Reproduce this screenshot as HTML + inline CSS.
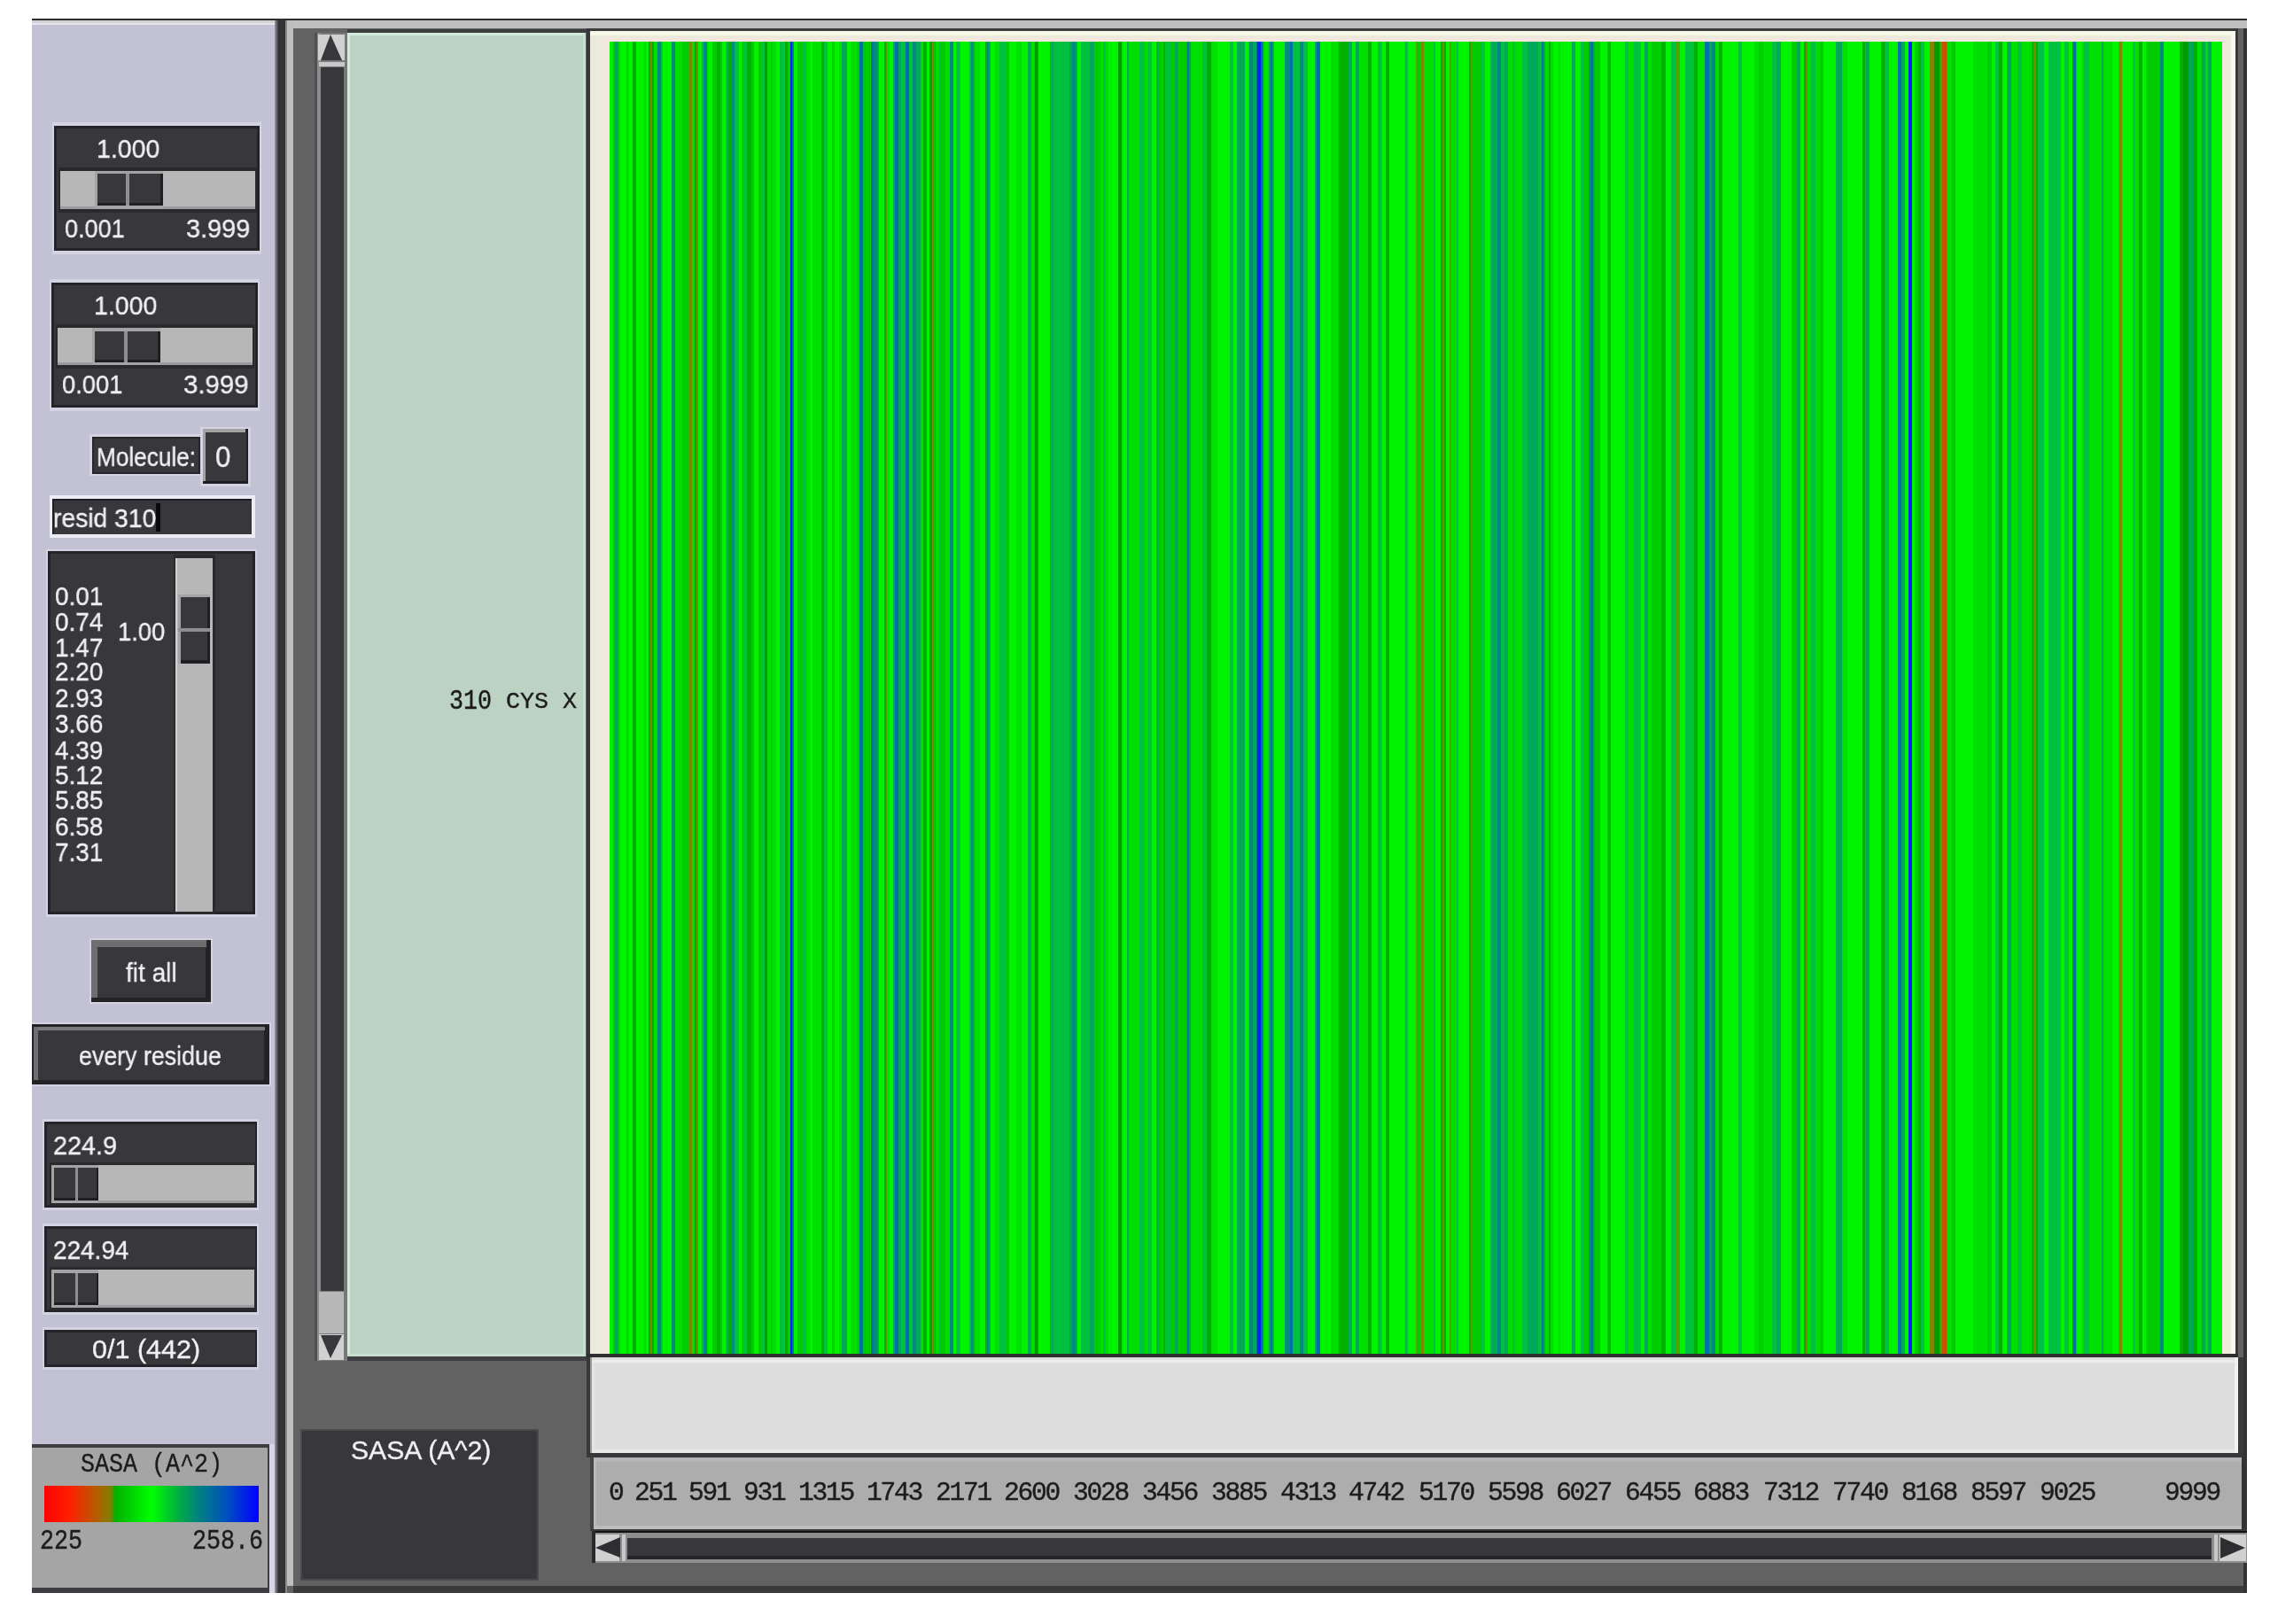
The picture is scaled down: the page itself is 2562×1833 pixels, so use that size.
<!DOCTYPE html>
<html><head><meta charset="utf-8">
<style>
html,body{margin:0;padding:0;}
body{width:2562px;height:1833px;background:#fff;position:relative;overflow:hidden;font-family:"Liberation Sans",sans-serif;}
.a{position:absolute;}
.dk{background:#38373c;}
.w{position:absolute;color:#f0f0f0;-webkit-text-stroke:0.35px #f0f0f0;font-family:"Liberation Sans",sans-serif;white-space:pre;line-height:1;transform-origin:0 0;will-change:transform;}
.m{position:absolute;color:#1c1c1c;font-family:"Liberation Mono",monospace;font-weight:normal;-webkit-text-stroke:0.35px #1c1c1c;white-space:pre;line-height:1;transform-origin:0 0;will-change:transform;}
#wrap{position:absolute;left:0;top:0;width:2562px;height:1833px;}
</style></head><body><div id="wrap">
<!-- top black line -->
<div class="a" style="left:36px;top:21px;width:2500px;height:2px;background:#2e2e30"></div>
<!-- left panel -->
<div class="a" style="left:36px;top:23px;width:275px;height:1775px;background:#c3c2d4"></div>
<div class="a" style="left:36px;top:23px;width:275px;height:3px;background:#d2d2d6"></div>
<div class="a" style="left:36px;top:26px;width:275px;height:2px;background:#e6e6ee"></div>
<div class="a" style="left:310px;top:23px;width:4px;height:1775px;background:linear-gradient(90deg,#9c9cac,#3a3a3e)"></div>
<!-- separator -->
<div class="a" style="left:314px;top:23px;width:8px;height:1775px;background:#333335"></div>
<!-- right region -->
<div class="a" style="left:322px;top:23px;width:2214px;height:1775px;background:#626262"></div>
<div class="a" style="left:322px;top:23px;width:2214px;height:9px;background:#c0c0c0"></div>
<div class="a" style="left:322px;top:23px;width:2px;height:1775px;background:#8a8a8a"></div>
<div class="a" style="left:324px;top:23px;width:7px;height:1767px;background:#bebebe"></div>
<div class="a" style="left:331px;top:1790px;width:2205px;height:8px;background:#3a3a3a"></div>
<div class="a" style="left:2532px;top:32px;width:4px;height:1766px;background:#333335"></div>

<!-- vertical scrollbar -->
<div class="a" style="left:355px;top:37px;width:37px;height:1499px;background:#787878"></div>
<div class="a" style="left:355px;top:37px;width:3px;height:1499px;background:#505052"></div>
<div class="a" style="left:358px;top:37px;width:4px;height:1499px;background:#8c8c8c"></div>
<div class="a" style="left:359px;top:39px;width:30px;height:29px;background:#d0d0d0"></div>
<svg class="a" style="left:359px;top:39px" width="30" height="29"><polygon points="14,0 3,29 27,29" fill="#38373c"/></svg>
<div class="a" style="left:360px;top:70px;width:29px;height:5px;background:#c8c8c8"></div>
<div class="a dk" style="left:362px;top:76px;width:26px;height:1381px"></div>
<div class="a" style="left:360px;top:1458px;width:28px;height:47px;background:#b8b8b8"></div>
<div class="a" style="left:360px;top:1506px;width:28px;height:29px;background:#d0d0d0"></div>
<svg class="a" style="left:360px;top:1506px" width="28" height="29"><polygon points="2,1 26,1 13,27" fill="#38373c"/></svg>

<!-- label column -->
<div class="a" style="left:392px;top:33px;width:270px;height:4px;background:#3c3f3e"></div>
<div class="a" style="left:392px;top:37px;width:269px;height:1494px;background:#bcd2c3"></div>
<div class="a" style="left:392px;top:37px;width:269px;height:3px;background:#d2ead9"></div>
<div class="a" style="left:392px;top:37px;width:3px;height:1494px;background:#d2ead9"></div>
<div class="a" style="left:658px;top:37px;width:3px;height:1494px;background:#c8e0d0"></div>
<div class="a" style="left:392px;top:1528px;width:269px;height:3px;background:#c8e0d0"></div>
<div class="a" style="left:392px;top:1531px;width:270px;height:5px;background:#404044"></div>
<div class="a" style="left:662px;top:32px;width:4px;height:1612px;background:#38383a"></div>

<!-- canvas -->
<div class="a" style="left:666px;top:32px;width:1860px;height:3px;background:#3c3c3c"></div>
<div class="a" style="left:666px;top:35px;width:1857px;height:1493px;background:#eceada"></div>
<div class="a" style="left:666px;top:35px;width:1857px;height:5px;background:#f8f8ea"></div>
<div class="a" style="left:682px;top:43px;width:1829px;height:4px;background:#f6e6e0"></div>
<div class="a" style="left:682px;top:43px;width:5px;height:1485px;background:#f6e6e0"></div>
<div class="a" style="left:2508px;top:43px;width:4px;height:1485px;background:#f6e6e0"></div>
<div class="a" style="left:2518px;top:35px;width:5px;height:1493px;background:#f8f8ec"></div>
<div class="a" style="left:2523px;top:32px;width:3px;height:1500px;background:#38383a"></div>
<div class="a" style="left:662px;top:1528px;width:1864px;height:4px;background:#2e2e30"></div>
<div id="stripes" class="a" style="left:688px;top:47px;width:1820px;height:1481px;background:#00d800"></div>

<!-- light panel -->
<div class="a" style="left:666px;top:1532px;width:1860px;height:108px;background:#dddddd"></div>
<div class="a" style="left:666px;top:1535px;width:1860px;height:3px;background:#ececec"></div>
<div class="a" style="left:666px;top:1532px;width:2px;height:108px;background:#9a9a9a"></div>
<div class="a" style="left:668px;top:1538px;width:3px;height:102px;background:#e6e6e6"></div>
<div class="a" style="left:2522px;top:1532px;width:4px;height:108px;background:#f2f2f2"></div>
<div class="a" style="left:2526px;top:1532px;width:6px;height:113px;background:#3a3a3a"></div>
<div class="a" style="left:668px;top:1636px;width:1854px;height:4px;background:#e8e8e8"></div>
<div class="a" style="left:662px;top:1640px;width:1870px;height:5px;background:#38383c"></div>

<!-- axis panel -->
<div class="a" style="left:666px;top:1645px;width:1869px;height:81px;background:#adadad"></div>
<div class="a" style="left:666px;top:1645px;width:4px;height:81px;background:#444"></div>
<div class="a" style="left:670px;top:1646px;width:1860px;height:4px;background:#b6b6b6"></div>
<div class="a" style="left:670px;top:1646px;width:3px;height:76px;background:#bababa"></div>
<div class="a" style="left:670px;top:1722px;width:1860px;height:4px;background:#bdbdbd"></div>
<div class="a" style="left:2530px;top:1645px;width:6px;height:83px;background:#333335"></div>
<div class="a" style="left:666px;top:1726px;width:1870px;height:2px;background:#3a3a3a"></div>

<!-- horizontal scrollbar -->
<div class="a" style="left:668px;top:1728px;width:1868px;height:2px;background:#111"></div>
<div class="a" style="left:668px;top:1730px;width:1868px;height:34px;background:#8e8e8e"></div>
<div class="a" style="left:668px;top:1728px;width:4px;height:36px;background:#2a2a2a"></div>
<div class="a" style="left:672px;top:1732px;width:27px;height:30px;background:#d0d0d0"></div>
<svg class="a" style="left:672px;top:1732px" width="28" height="30"><polygon points="0,15 28,3 28,26" fill="#2e2e32"/></svg>
<div class="a" style="left:702px;top:1732px;width:4px;height:30px;background:#c8c8c8"></div>
<div class="a dk" style="left:708px;top:1736px;width:1788px;height:24px"></div>
<div class="a" style="left:708px;top:1756px;width:1788px;height:4px;background:#242428"></div>
<div class="a" style="left:2499px;top:1732px;width:4px;height:30px;background:#c8c8c8"></div>
<div class="a" style="left:2505px;top:1732px;width:30px;height:30px;background:#d0d0d0"></div>
<svg class="a" style="left:2505px;top:1732px" width="30" height="30"><polygon points="1,3 29,15 1,27" fill="#2e2e32"/></svg>

<!-- SASA label box -->
<div class="a" style="left:339px;top:1613px;width:269px;height:171px;background:#4a4a4c"></div>
<div class="a dk" style="left:341px;top:1615px;width:265px;height:167px"></div>

<!-- color scale box -->
<div class="a" style="left:36px;top:1630px;width:268px;height:168px;background:#3e3e42"></div>
<div class="a" style="left:36px;top:1634px;width:266px;height:158px;background:#a5a5a5"></div>
<div class="a" style="left:304px;top:1630px;width:6px;height:168px;background:#d6d6e6"></div>
<div class="a" style="left:50px;top:1677px;width:242px;height:41px;background:linear-gradient(90deg,#ff0000 0%,#ff2000 12%,#b06000 25%,#808000 31%,#00b000 33%,#00ff00 50%,#00b040 62%,#008080 72%,#0050c0 85%,#0000ff 100%)"></div>


<div class="a" style="left:59px;top:138px;width:236px;height:149px;background:#d3d3e3;"></div>
<div class="a" style="left:61px;top:142px;width:232px;height:141px;background:#242428;"></div>
<div class="a" style="left:64px;top:145px;width:226px;height:135px;background:#38373c;"></div>
<div class="a" style="left:66px;top:189px;width:224px;height:50.5px;background:#2a2a2e;"></div>
<div class="a" style="left:68px;top:193px;width:220px;height:42.5px;background:#b7b7b7;"></div>
<div class="a" style="left:68px;top:232.5px;width:220px;height:3.0px;background:#9c9c9c;"></div>
<div class="a" style="left:106.6px;top:193px;width:77.1px;height:42.5px;background:#a4a4a4;"></div>
<div class="a" style="left:109.6px;top:196px;width:74.1px;height:36px;background:#1f1f23;"></div>
<div class="a" style="left:109.6px;top:196px;width:71.1px;height:33px;background:#38373c;"></div>
<div class="a" style="left:142.4px;top:196px;width:3.6px;height:36px;background:#8e8e8e;"></div>
<div class="w" style="left:108.8px;top:152.5px;font-size:30px;transform:scaleX(0.949)">1.000</div>
<div class="w" style="left:72.8px;top:242.6px;font-size:30px;transform:scaleX(0.901)">0.001</div>
<div class="w" style="left:209.6px;top:242.6px;font-size:30px;transform:scaleX(0.962)">3.999</div>
<div class="a" style="left:56px;top:314.5px;width:237px;height:149.2px;background:#d3d3e3;"></div>
<div class="a" style="left:58px;top:318.5px;width:233px;height:141.2px;background:#242428;"></div>
<div class="a" style="left:61px;top:321.5px;width:227px;height:135.2px;background:#38373c;"></div>
<div class="a" style="left:63.3px;top:366.3px;width:224.2px;height:49.9px;background:#2a2a2e;"></div>
<div class="a" style="left:65.3px;top:370.3px;width:220.2px;height:41.9px;background:#b7b7b7;"></div>
<div class="a" style="left:65.3px;top:409.2px;width:220.2px;height:3.0px;background:#9c9c9c;"></div>
<div class="a" style="left:104px;top:370.3px;width:76.6px;height:41.9px;background:#a4a4a4;"></div>
<div class="a" style="left:107px;top:373.5px;width:73.6px;height:35.0px;background:#1f1f23;"></div>
<div class="a" style="left:107px;top:373.5px;width:70.6px;height:32.0px;background:#38373c;"></div>
<div class="a" style="left:140px;top:373.5px;width:3.6px;height:35.0px;background:#8e8e8e;"></div>
<div class="w" style="left:106.3px;top:330.0px;font-size:30px;transform:scaleX(0.949)">1.000</div>
<div class="w" style="left:69.7px;top:418.7px;font-size:30px;transform:scaleX(0.910)">0.001</div>
<div class="w" style="left:206.5px;top:418.7px;font-size:30px;transform:scaleX(0.979)">3.999</div>
<div class="a" style="left:101px;top:490px;width:127px;height:47px;background:#d3d3e3;"></div>
<div class="a" style="left:103.5px;top:492.8px;width:122.8px;height:42.0px;background:#26262a;"></div>
<div class="a" style="left:105.5px;top:494.8px;width:118.8px;height:38.0px;background:#38373c;"></div>
<div class="w" style="left:109.0px;top:501.3px;font-size:30px;transform:scaleX(0.873)">Molecule:</div>
<div class="a" style="left:226px;top:482px;width:57px;height:67px;background:#d3d3e3;"></div>
<div class="a" style="left:228.7px;top:484.2px;width:51.8px;height:62.3px;background:#1e1e22;"></div>
<div class="a" style="left:228.7px;top:484.2px;width:48.8px;height:59.3px;background:#a2a2a2;"></div>
<div class="a" style="left:232px;top:488px;width:45.5px;height:55px;background:#38373c;"></div>
<div class="w" style="left:242.6px;top:498.5px;font-size:33px;transform:scaleX(0.95)">0</div>
<div class="a" style="left:56px;top:558.8px;width:232px;height:48.2px;background:#ececf4;"></div>
<div class="a" style="left:58.5px;top:563px;width:225.7px;height:40.2px;background:#1e1e22;"></div>
<div class="a" style="left:60.5px;top:565px;width:223.7px;height:38.2px;background:#38373c;"></div>
<div class="w" style="left:60.1px;top:570.4px;font-size:30px;transform:scaleX(0.942)">resid 310</div>
<div class="a" style="left:176px;top:568px;width:5px;height:31.5px;background:#0a0a0a;"></div>
<div class="a" style="left:51.5px;top:620px;width:238.5px;height:415px;background:#d3d3e3;"></div>
<div class="a" style="left:53.5px;top:622.2px;width:234.5px;height:410.2px;background:#242428;"></div>
<div class="a" style="left:56.5px;top:625.2px;width:228.5px;height:404.2px;background:#38373c;"></div>
<div class="a" style="left:195.5px;top:626px;width:47.5px;height:406px;background:#2a2a2e;"></div>
<div class="a" style="left:197.8px;top:629.6px;width:42.7px;height:399.4px;background:#b7b7b7;"></div>
<div class="a" style="left:197.8px;top:629.6px;width:2.2px;height:399.4px;background:#d0d0d0;"></div>
<div class="a" style="left:201px;top:671px;width:36px;height:78px;background:#a4a4a4;"></div>
<div class="a" style="left:204px;top:674px;width:33px;height:75px;background:#1f1f23;"></div>
<div class="a" style="left:204px;top:674px;width:30px;height:71px;background:#38373c;"></div>
<div class="a" style="left:201px;top:709px;width:36px;height:4px;background:#8e8e8e;"></div>
<div class="w" style="left:61.8px;top:657.5px;font-size:30px;transform:scaleX(0.930)">0.01</div>
<div class="w" style="left:61.8px;top:686.6px;font-size:30px;transform:scaleX(0.930)">0.74</div>
<div class="w" style="left:61.8px;top:716.4px;font-size:30px;transform:scaleX(0.930)">1.47</div>
<div class="w" style="left:61.8px;top:742.8px;font-size:30px;transform:scaleX(0.930)">2.20</div>
<div class="w" style="left:61.8px;top:772.6px;font-size:30px;transform:scaleX(0.930)">2.93</div>
<div class="w" style="left:61.8px;top:802.4px;font-size:30px;transform:scaleX(0.930)">3.66</div>
<div class="w" style="left:61.8px;top:832.3px;font-size:30px;transform:scaleX(0.930)">4.39</div>
<div class="w" style="left:61.8px;top:860.0px;font-size:30px;transform:scaleX(0.930)">5.12</div>
<div class="w" style="left:61.8px;top:888.2px;font-size:30px;transform:scaleX(0.930)">5.85</div>
<div class="w" style="left:61.8px;top:918.0px;font-size:30px;transform:scaleX(0.930)">6.58</div>
<div class="w" style="left:61.8px;top:947.0px;font-size:30px;transform:scaleX(0.930)">7.31</div>
<div class="w" style="left:133.2px;top:698.0px;font-size:30px;transform:scaleX(0.911)">1.00</div>
<div class="a" style="left:100.8px;top:1059px;width:138.8px;height:73.7px;background:#d3d3e3;"></div>
<div class="a" style="left:102.8px;top:1061px;width:134.8px;height:69.7px;background:#232326;"></div>
<div class="a" style="left:102.8px;top:1061px;width:130.2px;height:7.7px;background:#6e6e70;"></div>
<div class="a" style="left:102.8px;top:1061px;width:7.2px;height:65px;background:#6e6e70;"></div>
<div class="a" style="left:110px;top:1068.7px;width:122px;height:57.3px;background:#38373c;"></div>
<div class="w" style="left:141.5px;top:1083.4px;font-size:30px;transform:scaleX(0.935)">fit all</div>
<div class="a" style="left:36px;top:1153.6px;width:270px;height:72.4px;background:#d3d3e3;"></div>
<div class="a" style="left:36.4px;top:1155.6px;width:267.6px;height:68.4px;background:#232326;"></div>
<div class="a" style="left:38px;top:1159px;width:261px;height:3.6px;background:#7a7a7c;"></div>
<div class="a" style="left:38px;top:1159px;width:4.8px;height:60px;background:#6e6e70;"></div>
<div class="a" style="left:42.8px;top:1162.6px;width:255.2px;height:56.4px;background:#38373c;"></div>
<div class="w" style="left:88.9px;top:1177.0px;font-size:30px;transform:scaleX(0.893)">every residue</div>
<div class="a" style="left:48.3px;top:1262.7px;width:244.1px;height:103.0px;background:#d3d3e3;"></div>
<div class="a" style="left:50.3px;top:1265.7px;width:240.1px;height:97.0px;background:#242428;"></div>
<div class="a" style="left:53px;top:1268.7px;width:234.5px;height:91.0px;background:#38373c;"></div>
<div class="a" style="left:55.7px;top:1311.6px;width:233.0px;height:49.4px;background:#2a2a2e;"></div>
<div class="a" style="left:57.7px;top:1314.6px;width:229.0px;height:43.4px;background:#b7b7b7;"></div>
<div class="a" style="left:57.7px;top:1355px;width:229.0px;height:3px;background:#9c9c9c;"></div>
<div class="a" style="left:57.7px;top:1314.6px;width:53.6px;height:43.4px;background:#a4a4a4;"></div>
<div class="a" style="left:61px;top:1318.3px;width:50.3px;height:37.0px;background:#1f1f23;"></div>
<div class="a" style="left:61px;top:1318.3px;width:47.5px;height:34.0px;background:#38373c;"></div>
<div class="a" style="left:84.5px;top:1318.3px;width:3.7px;height:37.0px;background:#8e8e8e;"></div>
<div class="w" style="left:59.6px;top:1278.3px;font-size:30px;transform:scaleX(0.959)">224.9</div>
<div class="a" style="left:48.3px;top:1381px;width:244.1px;height:103px;background:#d3d3e3;"></div>
<div class="a" style="left:50.3px;top:1384px;width:240.1px;height:97px;background:#242428;"></div>
<div class="a" style="left:53px;top:1387px;width:234.5px;height:91px;background:#38373c;"></div>
<div class="a" style="left:55.7px;top:1430px;width:233.0px;height:49.3px;background:#2a2a2e;"></div>
<div class="a" style="left:57.7px;top:1433px;width:229.0px;height:43.3px;background:#b7b7b7;"></div>
<div class="a" style="left:57.7px;top:1473.3px;width:229.0px;height:3.0px;background:#9c9c9c;"></div>
<div class="a" style="left:57.7px;top:1433px;width:53.6px;height:43.3px;background:#a4a4a4;"></div>
<div class="a" style="left:61px;top:1436.6px;width:50.3px;height:36.9px;background:#1f1f23;"></div>
<div class="a" style="left:61px;top:1436.6px;width:47.5px;height:33.9px;background:#38373c;"></div>
<div class="a" style="left:84.5px;top:1436.6px;width:3.7px;height:36.9px;background:#8e8e8e;"></div>
<div class="w" style="left:59.7px;top:1395.6px;font-size:30px;transform:scaleX(0.931)">224.94</div>
<div class="a" style="left:48.3px;top:1498.2px;width:244.1px;height:47.6px;background:#d3d3e3;"></div>
<div class="a" style="left:50.3px;top:1501.2px;width:240.1px;height:41.6px;background:#242428;"></div>
<div class="a" style="left:53px;top:1503.5px;width:234.5px;height:36.8px;background:#38373c;"></div>
<div class="w" style="left:103.9px;top:1508.4px;font-size:30px;transform:scaleX(1.017)">0/1 (442)</div>
<div class="w" style="left:395.8px;top:1621.8px;font-size:30px;transform:scaleX(1.005)">SASA (A^2)</div>
<div class="m" style="left:90.6px;top:1638.8px;font-size:26.7px;letter-spacing:0.0px;transform:scale(1.0,1.08);">SASA (A^2)</div>
<div class="m" style="left:44.8px;top:1725.0px;font-size:26.7px;letter-spacing:0.0px;transform:scale(1.0,1.15);">225</div>
<div class="m" style="left:216.6px;top:1725.0px;font-size:26.7px;letter-spacing:0.0px;transform:scale(1.0,1.15);">258.6</div>
<div class="m" style="left:507.0px;top:776.5px;font-size:26.7px;letter-spacing:0.0px;transform:scale(1.0,1.15);">310</div>
<div class="m" style="left:571.0px;top:779.1px;font-size:26.7px;letter-spacing:0.0px;transform:scale(1.0,1.0);">CYS</div>
<div class="m" style="left:635.0px;top:779.1px;font-size:26.7px;letter-spacing:0.0px;transform:scale(1.0,1.0);">X</div>
<div class="m" style="left:686.6px;top:1672.0px;font-size:25.9px;letter-spacing:-1.95px;transform:scale(1.143,1.12);">0</div>
<div class="m" style="left:716.2px;top:1672.0px;font-size:25.9px;letter-spacing:-1.95px;transform:scale(1.143,1.12);">251</div>
<div class="m" style="left:776.8px;top:1672.0px;font-size:25.9px;letter-spacing:-1.95px;transform:scale(1.143,1.12);">591</div>
<div class="m" style="left:838.8px;top:1672.0px;font-size:25.9px;letter-spacing:-1.95px;transform:scale(1.143,1.12);">931</div>
<div class="m" style="left:900.8px;top:1672.0px;font-size:25.9px;letter-spacing:-1.95px;transform:scale(1.143,1.12);">1315</div>
<div class="m" style="left:978.4px;top:1672.0px;font-size:25.9px;letter-spacing:-1.95px;transform:scale(1.143,1.12);">1743</div>
<div class="m" style="left:1055.8px;top:1672.0px;font-size:25.9px;letter-spacing:-1.95px;transform:scale(1.143,1.12);">2171</div>
<div class="m" style="left:1133.4px;top:1672.0px;font-size:25.9px;letter-spacing:-1.95px;transform:scale(1.143,1.12);">2600</div>
<div class="m" style="left:1210.8px;top:1672.0px;font-size:25.9px;letter-spacing:-1.95px;transform:scale(1.143,1.12);">3028</div>
<div class="m" style="left:1289.4px;top:1672.0px;font-size:25.9px;letter-spacing:-1.95px;transform:scale(1.143,1.12);">3456</div>
<div class="m" style="left:1366.8px;top:1672.0px;font-size:25.9px;letter-spacing:-1.95px;transform:scale(1.143,1.12);">3885</div>
<div class="m" style="left:1444.5px;top:1672.0px;font-size:25.9px;letter-spacing:-1.95px;transform:scale(1.143,1.12);">4313</div>
<div class="m" style="left:1521.8px;top:1672.0px;font-size:25.9px;letter-spacing:-1.95px;transform:scale(1.143,1.12);">4742</div>
<div class="m" style="left:1600.8px;top:1672.0px;font-size:25.9px;letter-spacing:-1.95px;transform:scale(1.143,1.12);">5170</div>
<div class="m" style="left:1678.5px;top:1672.0px;font-size:25.9px;letter-spacing:-1.95px;transform:scale(1.143,1.12);">5598</div>
<div class="m" style="left:1755.8px;top:1672.0px;font-size:25.9px;letter-spacing:-1.95px;transform:scale(1.143,1.12);">6027</div>
<div class="m" style="left:1833.5px;top:1672.0px;font-size:25.9px;letter-spacing:-1.95px;transform:scale(1.143,1.12);">6455</div>
<div class="m" style="left:1911.3px;top:1672.0px;font-size:25.9px;letter-spacing:-1.95px;transform:scale(1.143,1.12);">6883</div>
<div class="m" style="left:1989.5px;top:1672.0px;font-size:25.9px;letter-spacing:-1.95px;transform:scale(1.143,1.12);">7312</div>
<div class="m" style="left:2067.6px;top:1672.0px;font-size:25.9px;letter-spacing:-1.95px;transform:scale(1.143,1.12);">7740</div>
<div class="m" style="left:2145.8px;top:1672.0px;font-size:25.9px;letter-spacing:-1.95px;transform:scale(1.143,1.12);">8168</div>
<div class="m" style="left:2223.8px;top:1672.0px;font-size:25.9px;letter-spacing:-1.95px;transform:scale(1.143,1.12);">8597</div>
<div class="m" style="left:2301.8px;top:1672.0px;font-size:25.9px;letter-spacing:-1.95px;transform:scale(1.143,1.12);">9025</div>
<div class="m" style="left:2443.2px;top:1672.0px;font-size:25.9px;letter-spacing:-1.95px;transform:scale(1.143,1.12);">9999</div>
<div class="a" style="left:688.0px;top:47px;width:3.9px;height:1481px;background:#00f400"></div>
<div class="a" style="left:691.9px;top:47px;width:2.0px;height:1481px;background:#00cc00"></div>
<div class="a" style="left:694.0px;top:47px;width:3.7px;height:1481px;background:#00a858"></div>
<div class="a" style="left:697.6px;top:47px;width:2.0px;height:1481px;background:#00e000"></div>
<div class="a" style="left:699.7px;top:47px;width:7.3px;height:1481px;background:#00f400"></div>
<div class="a" style="left:707.0px;top:47px;width:3.3px;height:1481px;background:#00e000"></div>
<div class="a" style="left:710.3px;top:47px;width:4.1px;height:1481px;background:#00f400"></div>
<div class="a" style="left:714.3px;top:47px;width:3.3px;height:1481px;background:#00b000"></div>
<div class="a" style="left:717.6px;top:47px;width:8.1px;height:1481px;background:#00f400"></div>
<div class="a" style="left:725.7px;top:47px;width:3.7px;height:1481px;background:#00e000"></div>
<div class="a" style="left:729.4px;top:47px;width:2.9px;height:1481px;background:#00f400"></div>
<div class="a" style="left:732.3px;top:47px;width:1.6px;height:1481px;background:#00b000"></div>
<div class="a" style="left:733.9px;top:47px;width:2.0px;height:1481px;background:#7c8800"></div>
<div class="a" style="left:735.9px;top:47px;width:2.0px;height:1481px;background:#00b000"></div>
<div class="a" style="left:738.0px;top:47px;width:4.1px;height:1481px;background:#00e000"></div>
<div class="a" style="left:742.0px;top:47px;width:4.1px;height:1481px;background:#008a80"></div>
<div class="a" style="left:746.1px;top:47px;width:1.6px;height:1481px;background:#00c040"></div>
<div class="a" style="left:747.8px;top:47px;width:10.6px;height:1481px;background:#00f400"></div>
<div class="a" style="left:758.3px;top:47px;width:3.3px;height:1481px;background:#008a80"></div>
<div class="a" style="left:761.6px;top:47px;width:8.1px;height:1481px;background:#00e000"></div>
<div class="a" style="left:769.8px;top:47px;width:8.1px;height:1481px;background:#00cc00"></div>
<div class="a" style="left:777.9px;top:47px;width:3.3px;height:1481px;background:#7c8800"></div>
<div class="a" style="left:781.2px;top:47px;width:2.4px;height:1481px;background:#00e000"></div>
<div class="a" style="left:783.6px;top:47px;width:2.4px;height:1481px;background:#00b000"></div>
<div class="a" style="left:786.1px;top:47px;width:1.6px;height:1481px;background:#7c8800"></div>
<div class="a" style="left:787.7px;top:47px;width:4.1px;height:1481px;background:#00f400"></div>
<div class="a" style="left:791.8px;top:47px;width:2.4px;height:1481px;background:#00c040"></div>
<div class="a" style="left:794.2px;top:47px;width:3.7px;height:1481px;background:#008a80"></div>
<div class="a" style="left:797.9px;top:47px;width:2.0px;height:1481px;background:#00e000"></div>
<div class="a" style="left:799.9px;top:47px;width:4.1px;height:1481px;background:#00f400"></div>
<div class="a" style="left:804.0px;top:47px;width:4.9px;height:1481px;background:#00cc00"></div>
<div class="a" style="left:808.9px;top:47px;width:4.1px;height:1481px;background:#00b000"></div>
<div class="a" style="left:813.0px;top:47px;width:2.4px;height:1481px;background:#00cc00"></div>
<div class="a" style="left:815.4px;top:47px;width:4.1px;height:1481px;background:#00f400"></div>
<div class="a" style="left:819.5px;top:47px;width:2.4px;height:1481px;background:#00a858"></div>
<div class="a" style="left:821.9px;top:47px;width:4.1px;height:1481px;background:#00b000"></div>
<div class="a" style="left:826.0px;top:47px;width:3.3px;height:1481px;background:#008a80"></div>
<div class="a" style="left:829.3px;top:47px;width:4.9px;height:1481px;background:#00c040"></div>
<div class="a" style="left:834.1px;top:47px;width:3.3px;height:1481px;background:#00f400"></div>
<div class="a" style="left:837.4px;top:47px;width:2.4px;height:1481px;background:#00cc00"></div>
<div class="a" style="left:839.8px;top:47px;width:3.3px;height:1481px;background:#00c040"></div>
<div class="a" style="left:843.1px;top:47px;width:4.9px;height:1481px;background:#00b000"></div>
<div class="a" style="left:848.0px;top:47px;width:3.3px;height:1481px;background:#00cc00"></div>
<div class="a" style="left:851.3px;top:47px;width:4.9px;height:1481px;background:#00f400"></div>
<div class="a" style="left:856.1px;top:47px;width:4.1px;height:1481px;background:#00cc00"></div>
<div class="a" style="left:860.2px;top:47px;width:2.4px;height:1481px;background:#00c040"></div>
<div class="a" style="left:862.7px;top:47px;width:3.3px;height:1481px;background:#009c00"></div>
<div class="a" style="left:865.9px;top:47px;width:4.1px;height:1481px;background:#00e000"></div>
<div class="a" style="left:870.0px;top:47px;width:2.4px;height:1481px;background:#00cc00"></div>
<div class="a" style="left:872.4px;top:47px;width:3.3px;height:1481px;background:#00e000"></div>
<div class="a" style="left:875.7px;top:47px;width:4.5px;height:1481px;background:#00f400"></div>
<div class="a" style="left:880.2px;top:47px;width:5.3px;height:1481px;background:#00c040"></div>
<div class="a" style="left:885.5px;top:47px;width:3.3px;height:1481px;background:#00b000"></div>
<div class="a" style="left:888.7px;top:47px;width:3.3px;height:1481px;background:#00cc00"></div>
<div class="a" style="left:892.0px;top:47px;width:2.0px;height:1481px;background:#0028e8"></div>
<div class="a" style="left:894.0px;top:47px;width:2.0px;height:1481px;background:#0070a8"></div>
<div class="a" style="left:896.1px;top:47px;width:4.1px;height:1481px;background:#00f400"></div>
<div class="a" style="left:900.2px;top:47px;width:5.7px;height:1481px;background:#00cc00"></div>
<div class="a" style="left:905.9px;top:47px;width:4.1px;height:1481px;background:#00c040"></div>
<div class="a" style="left:909.9px;top:47px;width:4.1px;height:1481px;background:#00e000"></div>
<div class="a" style="left:914.0px;top:47px;width:3.3px;height:1481px;background:#00f400"></div>
<div class="a" style="left:917.3px;top:47px;width:9.8px;height:1481px;background:#00e000"></div>
<div class="a" style="left:927.0px;top:47px;width:3.3px;height:1481px;background:#00b000"></div>
<div class="a" style="left:930.3px;top:47px;width:3.3px;height:1481px;background:#00c040"></div>
<div class="a" style="left:933.6px;top:47px;width:5.7px;height:1481px;background:#00f400"></div>
<div class="a" style="left:939.3px;top:47px;width:2.4px;height:1481px;background:#00cc00"></div>
<div class="a" style="left:941.7px;top:47px;width:4.9px;height:1481px;background:#00f400"></div>
<div class="a" style="left:946.6px;top:47px;width:3.7px;height:1481px;background:#00e000"></div>
<div class="a" style="left:950.3px;top:47px;width:5.3px;height:1481px;background:#00a858"></div>
<div class="a" style="left:955.6px;top:47px;width:4.9px;height:1481px;background:#00f400"></div>
<div class="a" style="left:960.5px;top:47px;width:6.5px;height:1481px;background:#00e000"></div>
<div class="a" style="left:967.0px;top:47px;width:3.3px;height:1481px;background:#00cc00"></div>
<div class="a" style="left:970.2px;top:47px;width:3.7px;height:1481px;background:#0070a8"></div>
<div class="a" style="left:973.9px;top:47px;width:1.2px;height:1481px;background:#00c040"></div>
<div class="a" style="left:975.1px;top:47px;width:5.7px;height:1481px;background:#00cc00"></div>
<div class="a" style="left:980.8px;top:47px;width:1.6px;height:1481px;background:#00a858"></div>
<div class="a" style="left:982.5px;top:47px;width:3.3px;height:1481px;background:#0070a8"></div>
<div class="a" style="left:985.7px;top:47px;width:4.1px;height:1481px;background:#008a80"></div>
<div class="a" style="left:989.8px;top:47px;width:2.4px;height:1481px;background:#00a858"></div>
<div class="a" style="left:992.2px;top:47px;width:5.7px;height:1481px;background:#00f400"></div>
<div class="a" style="left:998.0px;top:47px;width:1.6px;height:1481px;background:#00b000"></div>
<div class="a" style="left:999.6px;top:47px;width:1.6px;height:1481px;background:#50a400"></div>
<div class="a" style="left:1001.2px;top:47px;width:2.4px;height:1481px;background:#00e000"></div>
<div class="a" style="left:1003.7px;top:47px;width:4.1px;height:1481px;background:#00f400"></div>
<div class="a" style="left:1007.7px;top:47px;width:2.4px;height:1481px;background:#00a858"></div>
<div class="a" style="left:1010.2px;top:47px;width:4.1px;height:1481px;background:#0070a8"></div>
<div class="a" style="left:1014.3px;top:47px;width:2.4px;height:1481px;background:#00a858"></div>
<div class="a" style="left:1016.7px;top:47px;width:4.9px;height:1481px;background:#00c040"></div>
<div class="a" style="left:1021.6px;top:47px;width:4.5px;height:1481px;background:#0070a8"></div>
<div class="a" style="left:1026.1px;top:47px;width:3.7px;height:1481px;background:#00c040"></div>
<div class="a" style="left:1029.7px;top:47px;width:4.1px;height:1481px;background:#008a80"></div>
<div class="a" style="left:1033.8px;top:47px;width:5.7px;height:1481px;background:#00a858"></div>
<div class="a" style="left:1039.5px;top:47px;width:2.4px;height:1481px;background:#00e000"></div>
<div class="a" style="left:1042.0px;top:47px;width:4.1px;height:1481px;background:#00b000"></div>
<div class="a" style="left:1046.0px;top:47px;width:3.3px;height:1481px;background:#00f400"></div>
<div class="a" style="left:1049.3px;top:47px;width:2.4px;height:1481px;background:#009c00"></div>
<div class="a" style="left:1051.7px;top:47px;width:2.4px;height:1481px;background:#7c8800"></div>
<div class="a" style="left:1054.2px;top:47px;width:0.8px;height:1481px;background:#00cc00"></div>
<div class="a" style="left:1055.0px;top:47px;width:1.2px;height:1481px;background:#00b000"></div>
<div class="a" style="left:1056.2px;top:47px;width:3.7px;height:1481px;background:#00e000"></div>
<div class="a" style="left:1059.9px;top:47px;width:2.4px;height:1481px;background:#00c040"></div>
<div class="a" style="left:1062.3px;top:47px;width:4.9px;height:1481px;background:#00cc00"></div>
<div class="a" style="left:1067.2px;top:47px;width:4.9px;height:1481px;background:#00e000"></div>
<div class="a" style="left:1072.1px;top:47px;width:3.7px;height:1481px;background:#008a80"></div>
<div class="a" style="left:1075.8px;top:47px;width:3.7px;height:1481px;background:#00f400"></div>
<div class="a" style="left:1079.4px;top:47px;width:4.1px;height:1481px;background:#00c040"></div>
<div class="a" style="left:1083.5px;top:47px;width:10.6px;height:1481px;background:#00f400"></div>
<div class="a" style="left:1094.1px;top:47px;width:1.6px;height:1481px;background:#00c040"></div>
<div class="a" style="left:1095.7px;top:47px;width:2.4px;height:1481px;background:#008a80"></div>
<div class="a" style="left:1098.2px;top:47px;width:1.6px;height:1481px;background:#00a858"></div>
<div class="a" style="left:1099.8px;top:47px;width:5.7px;height:1481px;background:#00e000"></div>
<div class="a" style="left:1105.5px;top:47px;width:6.5px;height:1481px;background:#00f400"></div>
<div class="a" style="left:1112.0px;top:47px;width:2.0px;height:1481px;background:#00b000"></div>
<div class="a" style="left:1114.1px;top:47px;width:2.0px;height:1481px;background:#008a80"></div>
<div class="a" style="left:1116.1px;top:47px;width:1.6px;height:1481px;background:#00a858"></div>
<div class="a" style="left:1117.8px;top:47px;width:5.7px;height:1481px;background:#00f400"></div>
<div class="a" style="left:1123.5px;top:47px;width:4.9px;height:1481px;background:#00e000"></div>
<div class="a" style="left:1128.3px;top:47px;width:6.5px;height:1481px;background:#00c040"></div>
<div class="a" style="left:1134.9px;top:47px;width:4.1px;height:1481px;background:#00cc00"></div>
<div class="a" style="left:1138.9px;top:47px;width:8.1px;height:1481px;background:#00f400"></div>
<div class="a" style="left:1147.1px;top:47px;width:5.7px;height:1481px;background:#00e000"></div>
<div class="a" style="left:1152.8px;top:47px;width:7.3px;height:1481px;background:#00f400"></div>
<div class="a" style="left:1160.1px;top:47px;width:4.1px;height:1481px;background:#00a858"></div>
<div class="a" style="left:1164.2px;top:47px;width:3.3px;height:1481px;background:#00e000"></div>
<div class="a" style="left:1167.5px;top:47px;width:4.1px;height:1481px;background:#009c00"></div>
<div class="a" style="left:1171.5px;top:47px;width:13.9px;height:1481px;background:#00f400"></div>
<div class="a" style="left:1185.4px;top:47px;width:3.3px;height:1481px;background:#00a858"></div>
<div class="a" style="left:1188.7px;top:47px;width:18.7px;height:1481px;background:#00c040"></div>
<div class="a" style="left:1207.4px;top:47px;width:2.4px;height:1481px;background:#00a858"></div>
<div class="a" style="left:1209.8px;top:47px;width:4.1px;height:1481px;background:#008a80"></div>
<div class="a" style="left:1213.9px;top:47px;width:2.0px;height:1481px;background:#00a858"></div>
<div class="a" style="left:1216.0px;top:47px;width:3.7px;height:1481px;background:#00f400"></div>
<div class="a" style="left:1219.6px;top:47px;width:10.6px;height:1481px;background:#00c040"></div>
<div class="a" style="left:1230.2px;top:47px;width:4.9px;height:1481px;background:#00a858"></div>
<div class="a" style="left:1235.1px;top:47px;width:4.9px;height:1481px;background:#00cc00"></div>
<div class="a" style="left:1240.0px;top:47px;width:2.4px;height:1481px;background:#00cc00"></div>
<div class="a" style="left:1242.4px;top:47px;width:2.4px;height:1481px;background:#00e000"></div>
<div class="a" style="left:1244.9px;top:47px;width:3.3px;height:1481px;background:#00c040"></div>
<div class="a" style="left:1248.1px;top:47px;width:3.3px;height:1481px;background:#00e000"></div>
<div class="a" style="left:1251.4px;top:47px;width:10.6px;height:1481px;background:#00f400"></div>
<div class="a" style="left:1262.0px;top:47px;width:4.1px;height:1481px;background:#009c00"></div>
<div class="a" style="left:1266.1px;top:47px;width:1.6px;height:1481px;background:#00e000"></div>
<div class="a" style="left:1267.7px;top:47px;width:4.1px;height:1481px;background:#00f400"></div>
<div class="a" style="left:1271.8px;top:47px;width:2.4px;height:1481px;background:#00a858"></div>
<div class="a" style="left:1274.2px;top:47px;width:11.4px;height:1481px;background:#00e000"></div>
<div class="a" style="left:1285.6px;top:47px;width:6.5px;height:1481px;background:#00c040"></div>
<div class="a" style="left:1292.2px;top:47px;width:4.1px;height:1481px;background:#00e000"></div>
<div class="a" style="left:1296.2px;top:47px;width:4.1px;height:1481px;background:#00c040"></div>
<div class="a" style="left:1300.3px;top:47px;width:4.9px;height:1481px;background:#00f400"></div>
<div class="a" style="left:1305.2px;top:47px;width:2.4px;height:1481px;background:#00a858"></div>
<div class="a" style="left:1307.6px;top:47px;width:4.9px;height:1481px;background:#00cc00"></div>
<div class="a" style="left:1312.5px;top:47px;width:2.4px;height:1481px;background:#00b000"></div>
<div class="a" style="left:1315.0px;top:47px;width:6.5px;height:1481px;background:#00c040"></div>
<div class="a" style="left:1321.5px;top:47px;width:4.9px;height:1481px;background:#00cc00"></div>
<div class="a" style="left:1326.4px;top:47px;width:4.1px;height:1481px;background:#00a858"></div>
<div class="a" style="left:1330.5px;top:47px;width:8.1px;height:1481px;background:#00cc00"></div>
<div class="a" style="left:1338.6px;top:47px;width:1.6px;height:1481px;background:#00a858"></div>
<div class="a" style="left:1340.2px;top:47px;width:2.0px;height:1481px;background:#0070a8"></div>
<div class="a" style="left:1342.3px;top:47px;width:1.6px;height:1481px;background:#00a858"></div>
<div class="a" style="left:1343.9px;top:47px;width:13.4px;height:1481px;background:#00e000"></div>
<div class="a" style="left:1357.4px;top:47px;width:4.9px;height:1481px;background:#00c040"></div>
<div class="a" style="left:1362.2px;top:47px;width:4.9px;height:1481px;background:#00b000"></div>
<div class="a" style="left:1367.1px;top:47px;width:6.5px;height:1481px;background:#00e000"></div>
<div class="a" style="left:1373.7px;top:47px;width:13.9px;height:1481px;background:#00f400"></div>
<div class="a" style="left:1387.5px;top:47px;width:4.1px;height:1481px;background:#00c040"></div>
<div class="a" style="left:1391.6px;top:47px;width:4.1px;height:1481px;background:#00f400"></div>
<div class="a" style="left:1395.7px;top:47px;width:9.8px;height:1481px;background:#00a858"></div>
<div class="a" style="left:1405.4px;top:47px;width:4.1px;height:1481px;background:#00f400"></div>
<div class="a" style="left:1409.5px;top:47px;width:4.9px;height:1481px;background:#008a80"></div>
<div class="a" style="left:1414.4px;top:47px;width:3.3px;height:1481px;background:#00a858"></div>
<div class="a" style="left:1417.7px;top:47px;width:1.6px;height:1481px;background:#0070a8"></div>
<div class="a" style="left:1419.3px;top:47px;width:4.1px;height:1481px;background:#0028e8"></div>
<div class="a" style="left:1423.4px;top:47px;width:1.6px;height:1481px;background:#0070a8"></div>
<div class="a" style="left:1425.0px;top:47px;width:1.2px;height:1481px;background:#008a80"></div>
<div class="a" style="left:1426.2px;top:47px;width:6.1px;height:1481px;background:#00e000"></div>
<div class="a" style="left:1432.3px;top:47px;width:1.6px;height:1481px;background:#00a858"></div>
<div class="a" style="left:1434.0px;top:47px;width:2.0px;height:1481px;background:#0070a8"></div>
<div class="a" style="left:1436.0px;top:47px;width:2.0px;height:1481px;background:#00a858"></div>
<div class="a" style="left:1438.0px;top:47px;width:12.2px;height:1481px;background:#00f400"></div>
<div class="a" style="left:1450.3px;top:47px;width:5.7px;height:1481px;background:#008a80"></div>
<div class="a" style="left:1456.0px;top:47px;width:3.3px;height:1481px;background:#0070a8"></div>
<div class="a" style="left:1459.2px;top:47px;width:8.1px;height:1481px;background:#00c040"></div>
<div class="a" style="left:1467.4px;top:47px;width:3.3px;height:1481px;background:#008a80"></div>
<div class="a" style="left:1470.6px;top:47px;width:5.7px;height:1481px;background:#00c040"></div>
<div class="a" style="left:1476.3px;top:47px;width:7.3px;height:1481px;background:#00f400"></div>
<div class="a" style="left:1483.7px;top:47px;width:2.4px;height:1481px;background:#00a858"></div>
<div class="a" style="left:1486.1px;top:47px;width:3.7px;height:1481px;background:#0070a8"></div>
<div class="a" style="left:1489.8px;top:47px;width:12.6px;height:1481px;background:#00f400"></div>
<div class="a" style="left:1502.4px;top:47px;width:8.1px;height:1481px;background:#00e000"></div>
<div class="a" style="left:1510.6px;top:47px;width:11.4px;height:1481px;background:#00b000"></div>
<div class="a" style="left:1522.0px;top:47px;width:4.1px;height:1481px;background:#00a858"></div>
<div class="a" style="left:1526.1px;top:47px;width:4.1px;height:1481px;background:#00f400"></div>
<div class="a" style="left:1530.1px;top:47px;width:4.1px;height:1481px;background:#00a858"></div>
<div class="a" style="left:1534.2px;top:47px;width:9.8px;height:1481px;background:#00e000"></div>
<div class="a" style="left:1544.0px;top:47px;width:4.1px;height:1481px;background:#00b000"></div>
<div class="a" style="left:1548.1px;top:47px;width:7.3px;height:1481px;background:#00f400"></div>
<div class="a" style="left:1555.4px;top:47px;width:4.1px;height:1481px;background:#00c040"></div>
<div class="a" style="left:1559.5px;top:47px;width:4.9px;height:1481px;background:#00f400"></div>
<div class="a" style="left:1564.4px;top:47px;width:4.1px;height:1481px;background:#00b000"></div>
<div class="a" style="left:1568.4px;top:47px;width:17.1px;height:1481px;background:#00f400"></div>
<div class="a" style="left:1585.6px;top:47px;width:3.3px;height:1481px;background:#00c040"></div>
<div class="a" style="left:1588.8px;top:47px;width:9.0px;height:1481px;background:#00f400"></div>
<div class="a" style="left:1597.8px;top:47px;width:2.4px;height:1481px;background:#50a400"></div>
<div class="a" style="left:1600.2px;top:47px;width:3.7px;height:1481px;background:#00cc00"></div>
<div class="a" style="left:1603.9px;top:47px;width:2.9px;height:1481px;background:#7c8800"></div>
<div class="a" style="left:1606.7px;top:47px;width:3.3px;height:1481px;background:#00e000"></div>
<div class="a" style="left:1610.0px;top:47px;width:8.1px;height:1481px;background:#00e000"></div>
<div class="a" style="left:1618.1px;top:47px;width:2.0px;height:1481px;background:#00c040"></div>
<div class="a" style="left:1620.2px;top:47px;width:5.7px;height:1481px;background:#00f400"></div>
<div class="a" style="left:1625.9px;top:47px;width:2.0px;height:1481px;background:#00b000"></div>
<div class="a" style="left:1627.9px;top:47px;width:2.4px;height:1481px;background:#7c8800"></div>
<div class="a" style="left:1630.4px;top:47px;width:1.6px;height:1481px;background:#00b000"></div>
<div class="a" style="left:1632.0px;top:47px;width:4.1px;height:1481px;background:#00f400"></div>
<div class="a" style="left:1636.1px;top:47px;width:2.0px;height:1481px;background:#50a400"></div>
<div class="a" style="left:1638.1px;top:47px;width:6.1px;height:1481px;background:#00e000"></div>
<div class="a" style="left:1644.2px;top:47px;width:2.0px;height:1481px;background:#00c040"></div>
<div class="a" style="left:1646.3px;top:47px;width:11.8px;height:1481px;background:#00f400"></div>
<div class="a" style="left:1658.1px;top:47px;width:2.0px;height:1481px;background:#00b000"></div>
<div class="a" style="left:1660.1px;top:47px;width:2.0px;height:1481px;background:#50a400"></div>
<div class="a" style="left:1662.2px;top:47px;width:9.8px;height:1481px;background:#00cc00"></div>
<div class="a" style="left:1671.9px;top:47px;width:4.1px;height:1481px;background:#00c040"></div>
<div class="a" style="left:1676.0px;top:47px;width:5.7px;height:1481px;background:#00f400"></div>
<div class="a" style="left:1681.7px;top:47px;width:2.4px;height:1481px;background:#00c040"></div>
<div class="a" style="left:1684.2px;top:47px;width:6.1px;height:1481px;background:#00a858"></div>
<div class="a" style="left:1690.3px;top:47px;width:3.7px;height:1481px;background:#008a80"></div>
<div class="a" style="left:1693.9px;top:47px;width:4.1px;height:1481px;background:#00c040"></div>
<div class="a" style="left:1698.0px;top:47px;width:4.1px;height:1481px;background:#00a858"></div>
<div class="a" style="left:1702.1px;top:47px;width:4.9px;height:1481px;background:#00e000"></div>
<div class="a" style="left:1707.0px;top:47px;width:3.3px;height:1481px;background:#00c040"></div>
<div class="a" style="left:1710.2px;top:47px;width:8.1px;height:1481px;background:#00e000"></div>
<div class="a" style="left:1718.4px;top:47px;width:5.7px;height:1481px;background:#00c040"></div>
<div class="a" style="left:1724.1px;top:47px;width:12.2px;height:1481px;background:#00a858"></div>
<div class="a" style="left:1736.3px;top:47px;width:3.3px;height:1481px;background:#00c040"></div>
<div class="a" style="left:1739.6px;top:47px;width:2.4px;height:1481px;background:#0070a8"></div>
<div class="a" style="left:1742.0px;top:47px;width:2.4px;height:1481px;background:#00a858"></div>
<div class="a" style="left:1744.5px;top:47px;width:3.3px;height:1481px;background:#00e000"></div>
<div class="a" style="left:1747.7px;top:47px;width:2.4px;height:1481px;background:#00b000"></div>
<div class="a" style="left:1750.2px;top:47px;width:2.4px;height:1481px;background:#00e000"></div>
<div class="a" style="left:1752.6px;top:47px;width:6.5px;height:1481px;background:#00f400"></div>
<div class="a" style="left:1759.1px;top:47px;width:1.6px;height:1481px;background:#00e000"></div>
<div class="a" style="left:1760.8px;top:47px;width:13.0px;height:1481px;background:#00f400"></div>
<div class="a" style="left:1773.8px;top:47px;width:4.1px;height:1481px;background:#00a858"></div>
<div class="a" style="left:1777.9px;top:47px;width:6.5px;height:1481px;background:#00f400"></div>
<div class="a" style="left:1784.4px;top:47px;width:3.3px;height:1481px;background:#00c040"></div>
<div class="a" style="left:1787.7px;top:47px;width:5.7px;height:1481px;background:#00cc00"></div>
<div class="a" style="left:1793.4px;top:47px;width:1.6px;height:1481px;background:#008a80"></div>
<div class="a" style="left:1795.0px;top:47px;width:1.2px;height:1481px;background:#008a80"></div>
<div class="a" style="left:1796.2px;top:47px;width:2.0px;height:1481px;background:#0070a8"></div>
<div class="a" style="left:1798.3px;top:47px;width:2.0px;height:1481px;background:#00a858"></div>
<div class="a" style="left:1800.3px;top:47px;width:6.1px;height:1481px;background:#00cc00"></div>
<div class="a" style="left:1806.4px;top:47px;width:8.1px;height:1481px;background:#00f400"></div>
<div class="a" style="left:1814.6px;top:47px;width:3.3px;height:1481px;background:#00b000"></div>
<div class="a" style="left:1817.8px;top:47px;width:16.3px;height:1481px;background:#00f400"></div>
<div class="a" style="left:1834.1px;top:47px;width:4.1px;height:1481px;background:#00c040"></div>
<div class="a" style="left:1838.2px;top:47px;width:5.7px;height:1481px;background:#00e000"></div>
<div class="a" style="left:1843.9px;top:47px;width:8.1px;height:1481px;background:#00c040"></div>
<div class="a" style="left:1852.0px;top:47px;width:4.1px;height:1481px;background:#00f400"></div>
<div class="a" style="left:1856.1px;top:47px;width:4.1px;height:1481px;background:#00a858"></div>
<div class="a" style="left:1860.2px;top:47px;width:4.1px;height:1481px;background:#00e000"></div>
<div class="a" style="left:1864.3px;top:47px;width:10.6px;height:1481px;background:#00cc00"></div>
<div class="a" style="left:1874.9px;top:47px;width:4.9px;height:1481px;background:#00b000"></div>
<div class="a" style="left:1879.8px;top:47px;width:6.5px;height:1481px;background:#00f400"></div>
<div class="a" style="left:1886.3px;top:47px;width:5.7px;height:1481px;background:#00c040"></div>
<div class="a" style="left:1892.0px;top:47px;width:4.1px;height:1481px;background:#50a400"></div>
<div class="a" style="left:1896.1px;top:47px;width:5.7px;height:1481px;background:#00f400"></div>
<div class="a" style="left:1901.8px;top:47px;width:10.6px;height:1481px;background:#00c040"></div>
<div class="a" style="left:1912.4px;top:47px;width:4.1px;height:1481px;background:#00b000"></div>
<div class="a" style="left:1916.4px;top:47px;width:7.3px;height:1481px;background:#00e000"></div>
<div class="a" style="left:1923.8px;top:47px;width:4.9px;height:1481px;background:#0070a8"></div>
<div class="a" style="left:1928.7px;top:47px;width:3.3px;height:1481px;background:#00a858"></div>
<div class="a" style="left:1931.9px;top:47px;width:4.1px;height:1481px;background:#008a80"></div>
<div class="a" style="left:1936.0px;top:47px;width:4.1px;height:1481px;background:#00e000"></div>
<div class="a" style="left:1940.1px;top:47px;width:4.1px;height:1481px;background:#00b000"></div>
<div class="a" style="left:1944.1px;top:47px;width:17.9px;height:1481px;background:#00f400"></div>
<div class="a" style="left:1962.1px;top:47px;width:4.1px;height:1481px;background:#00c040"></div>
<div class="a" style="left:1966.1px;top:47px;width:13.9px;height:1481px;background:#00f400"></div>
<div class="a" style="left:1980.0px;top:47px;width:4.9px;height:1481px;background:#00e000"></div>
<div class="a" style="left:1984.9px;top:47px;width:4.9px;height:1481px;background:#00cc00"></div>
<div class="a" style="left:1989.8px;top:47px;width:10.6px;height:1481px;background:#00e000"></div>
<div class="a" style="left:2000.4px;top:47px;width:4.9px;height:1481px;background:#00c040"></div>
<div class="a" style="left:2005.3px;top:47px;width:4.9px;height:1481px;background:#00a858"></div>
<div class="a" style="left:2010.2px;top:47px;width:12.2px;height:1481px;background:#00f400"></div>
<div class="a" style="left:2022.4px;top:47px;width:5.7px;height:1481px;background:#00cc00"></div>
<div class="a" style="left:2028.1px;top:47px;width:4.1px;height:1481px;background:#00a858"></div>
<div class="a" style="left:2032.2px;top:47px;width:4.1px;height:1481px;background:#00f400"></div>
<div class="a" style="left:2036.2px;top:47px;width:1.6px;height:1481px;background:#00b000"></div>
<div class="a" style="left:2037.9px;top:47px;width:2.4px;height:1481px;background:#7c8800"></div>
<div class="a" style="left:2040.3px;top:47px;width:4.1px;height:1481px;background:#00e000"></div>
<div class="a" style="left:2044.4px;top:47px;width:4.9px;height:1481px;background:#00c040"></div>
<div class="a" style="left:2049.3px;top:47px;width:4.9px;height:1481px;background:#00e000"></div>
<div class="a" style="left:2054.2px;top:47px;width:4.1px;height:1481px;background:#00cc00"></div>
<div class="a" style="left:2058.2px;top:47px;width:13.9px;height:1481px;background:#00f400"></div>
<div class="a" style="left:2072.1px;top:47px;width:7.3px;height:1481px;background:#00a858"></div>
<div class="a" style="left:2079.4px;top:47px;width:5.7px;height:1481px;background:#00e000"></div>
<div class="a" style="left:2085.1px;top:47px;width:17.1px;height:1481px;background:#00f400"></div>
<div class="a" style="left:2102.2px;top:47px;width:3.3px;height:1481px;background:#00b000"></div>
<div class="a" style="left:2105.5px;top:47px;width:4.1px;height:1481px;background:#00a858"></div>
<div class="a" style="left:2109.6px;top:47px;width:13.9px;height:1481px;background:#00f400"></div>
<div class="a" style="left:2123.4px;top:47px;width:3.3px;height:1481px;background:#00b000"></div>
<div class="a" style="left:2126.7px;top:47px;width:5.7px;height:1481px;background:#00c040"></div>
<div class="a" style="left:2132.4px;top:47px;width:9.8px;height:1481px;background:#00f400"></div>
<div class="a" style="left:2142.2px;top:47px;width:4.1px;height:1481px;background:#0070a8"></div>
<div class="a" style="left:2146.3px;top:47px;width:3.3px;height:1481px;background:#00a858"></div>
<div class="a" style="left:2149.5px;top:47px;width:4.1px;height:1481px;background:#00f400"></div>
<div class="a" style="left:2153.6px;top:47px;width:4.5px;height:1481px;background:#0028e8"></div>
<div class="a" style="left:2158.1px;top:47px;width:2.9px;height:1481px;background:#00f400"></div>
<div class="a" style="left:2160.9px;top:47px;width:4.1px;height:1481px;background:#00cc00"></div>
<div class="a" style="left:2165.0px;top:47px;width:3.3px;height:1481px;background:#00b000"></div>
<div class="a" style="left:2168.3px;top:47px;width:4.1px;height:1481px;background:#00c040"></div>
<div class="a" style="left:2172.3px;top:47px;width:5.7px;height:1481px;background:#00f400"></div>
<div class="a" style="left:2178.0px;top:47px;width:4.5px;height:1481px;background:#7c8800"></div>
<div class="a" style="left:2182.5px;top:47px;width:6.9px;height:1481px;background:#009c00"></div>
<div class="a" style="left:2189.4px;top:47px;width:2.4px;height:1481px;background:#50a400"></div>
<div class="a" style="left:2191.9px;top:47px;width:4.9px;height:1481px;background:#c85000"></div>
<div class="a" style="left:2196.8px;top:47px;width:1.6px;height:1481px;background:#50a400"></div>
<div class="a" style="left:2198.4px;top:47px;width:4.9px;height:1481px;background:#00e000"></div>
<div class="a" style="left:2203.3px;top:47px;width:4.1px;height:1481px;background:#00cc00"></div>
<div class="a" style="left:2207.4px;top:47px;width:19.6px;height:1481px;background:#00f400"></div>
<div class="a" style="left:2226.9px;top:47px;width:16.3px;height:1481px;background:#00e000"></div>
<div class="a" style="left:2243.2px;top:47px;width:4.9px;height:1481px;background:#00cc00"></div>
<div class="a" style="left:2248.1px;top:47px;width:4.1px;height:1481px;background:#00f400"></div>
<div class="a" style="left:2252.2px;top:47px;width:4.1px;height:1481px;background:#00c040"></div>
<div class="a" style="left:2256.3px;top:47px;width:3.3px;height:1481px;background:#00b000"></div>
<div class="a" style="left:2259.5px;top:47px;width:5.7px;height:1481px;background:#00f400"></div>
<div class="a" style="left:2265.2px;top:47px;width:4.9px;height:1481px;background:#00a858"></div>
<div class="a" style="left:2270.1px;top:47px;width:6.5px;height:1481px;background:#00e000"></div>
<div class="a" style="left:2276.7px;top:47px;width:5.7px;height:1481px;background:#00c040"></div>
<div class="a" style="left:2282.4px;top:47px;width:10.6px;height:1481px;background:#00e000"></div>
<div class="a" style="left:2293.0px;top:47px;width:2.4px;height:1481px;background:#00b000"></div>
<div class="a" style="left:2295.4px;top:47px;width:2.4px;height:1481px;background:#7c8800"></div>
<div class="a" style="left:2297.8px;top:47px;width:2.4px;height:1481px;background:#00b000"></div>
<div class="a" style="left:2300.3px;top:47px;width:6.5px;height:1481px;background:#00c040"></div>
<div class="a" style="left:2306.8px;top:47px;width:4.9px;height:1481px;background:#00f400"></div>
<div class="a" style="left:2311.7px;top:47px;width:14.7px;height:1481px;background:#00c040"></div>
<div class="a" style="left:2326.4px;top:47px;width:4.1px;height:1481px;background:#00f400"></div>
<div class="a" style="left:2330.4px;top:47px;width:4.1px;height:1481px;background:#00c040"></div>
<div class="a" style="left:2334.5px;top:47px;width:4.1px;height:1481px;background:#00f400"></div>
<div class="a" style="left:2338.6px;top:47px;width:4.9px;height:1481px;background:#0070a8"></div>
<div class="a" style="left:2343.5px;top:47px;width:6.5px;height:1481px;background:#00f400"></div>
<div class="a" style="left:2350.0px;top:47px;width:2.4px;height:1481px;background:#00e000"></div>
<div class="a" style="left:2352.4px;top:47px;width:5.7px;height:1481px;background:#00c040"></div>
<div class="a" style="left:2358.1px;top:47px;width:13.9px;height:1481px;background:#00e000"></div>
<div class="a" style="left:2372.0px;top:47px;width:2.4px;height:1481px;background:#00a858"></div>
<div class="a" style="left:2374.4px;top:47px;width:9.8px;height:1481px;background:#00e000"></div>
<div class="a" style="left:2384.2px;top:47px;width:7.3px;height:1481px;background:#00f400"></div>
<div class="a" style="left:2391.6px;top:47px;width:3.3px;height:1481px;background:#7c8800"></div>
<div class="a" style="left:2394.8px;top:47px;width:12.2px;height:1481px;background:#00f400"></div>
<div class="a" style="left:2407.0px;top:47px;width:3.3px;height:1481px;background:#00c040"></div>
<div class="a" style="left:2410.3px;top:47px;width:4.1px;height:1481px;background:#00e000"></div>
<div class="a" style="left:2414.4px;top:47px;width:3.3px;height:1481px;background:#00b000"></div>
<div class="a" style="left:2417.6px;top:47px;width:4.9px;height:1481px;background:#00f400"></div>
<div class="a" style="left:2422.5px;top:47px;width:15.5px;height:1481px;background:#00cc00"></div>
<div class="a" style="left:2438.0px;top:47px;width:4.1px;height:1481px;background:#008a80"></div>
<div class="a" style="left:2442.1px;top:47px;width:17.9px;height:1481px;background:#00f400"></div>
<div class="a" style="left:2460.0px;top:47px;width:4.1px;height:1481px;background:#00b000"></div>
<div class="a" style="left:2464.1px;top:47px;width:5.7px;height:1481px;background:#009c00"></div>
<div class="a" style="left:2469.8px;top:47px;width:4.9px;height:1481px;background:#00a858"></div>
<div class="a" style="left:2474.7px;top:47px;width:4.9px;height:1481px;background:#00b000"></div>
<div class="a" style="left:2479.6px;top:47px;width:4.9px;height:1481px;background:#00e000"></div>
<div class="a" style="left:2484.5px;top:47px;width:4.1px;height:1481px;background:#00a858"></div>
<div class="a" style="left:2488.5px;top:47px;width:3.3px;height:1481px;background:#00e000"></div>
<div class="a" style="left:2491.8px;top:47px;width:4.1px;height:1481px;background:#00a858"></div>
<div class="a" style="left:2495.9px;top:47px;width:12.1px;height:1481px;background:#00f400"></div>
</div></body></html>
